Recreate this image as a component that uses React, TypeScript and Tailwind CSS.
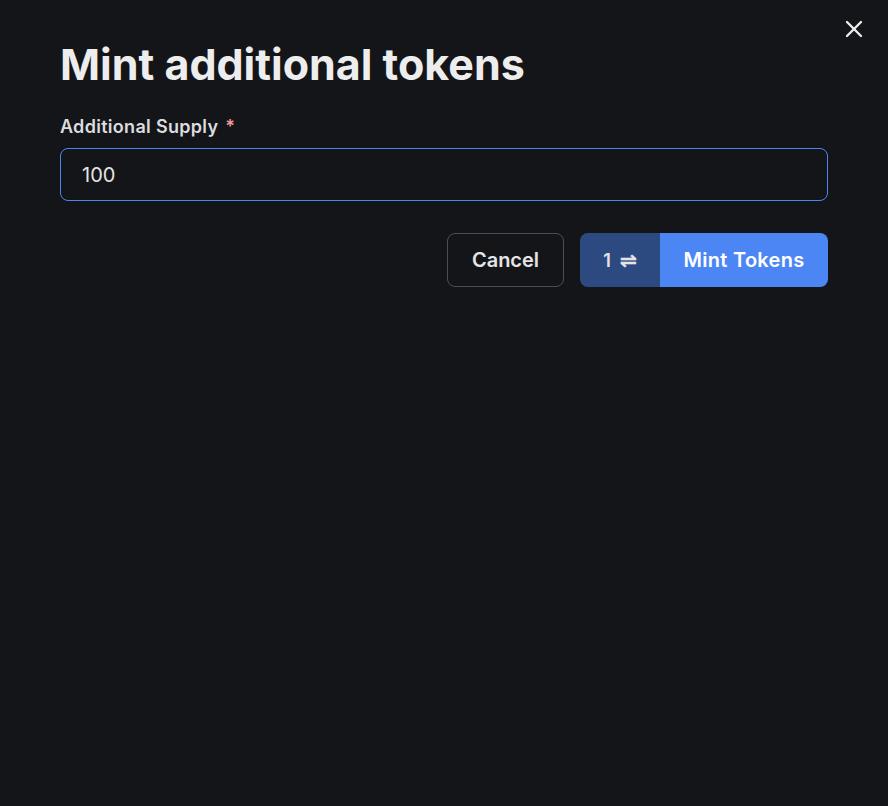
import { X } from 'lucide-react';

export default function App() {
  return (
    <div
      className="relative w-[888px] h-[806px] bg-[#141519] text-[#ededed]"
      style={{ fontFamily: 'Inter, "Noto Sans", sans-serif' }}
    >
      <button className="absolute right-[20px] top-[15px] text-[#ededed]">
        <X size={28} strokeWidth={2} />
      </button>

      <div className="flex flex-col px-[60px] pt-[37px]">
        <h1 className="text-[43px] font-bold leading-[54px]">Mint additional tokens</h1>

        <div className="mt-[24px] flex flex-col gap-[9px]">
          <label className="text-[18px] font-semibold leading-[24px] tracking-[0.3px] text-[#dcdcdf]">
            Additional Supply <span className="ml-[2px] text-[#f09a9a]">*</span>
          </label>
          <input
            defaultValue="100"
            className="h-[53px] w-full rounded-[8px] border border-[#4d84f0] bg-[#141519] px-[21px] text-[20px] text-[#e4e4e7] outline-none"
          />
        </div>

        <div className="mt-[32px] flex justify-end gap-[16px]">
          <button className="h-[54px] w-[117px] rounded-[8px] border border-[#4d4e53] text-[20px] font-semibold text-[#e4e4e7]">
            Cancel
          </button>
          <div className="flex h-[54px] overflow-hidden rounded-[8px]">
            <button className="flex w-[80px] items-center justify-center gap-[9px] bg-[#2d4a80] text-[18px] font-semibold text-[#e4e4e7]">
              <span>1</span>
              <span className="text-[20px]">⇌</span>
            </button>
            <button className="w-[168px] bg-[#4c86f5] text-[20px] font-semibold tracking-[0.3px] text-white">
              Mint Tokens
            </button>
          </div>
        </div>
      </div>
    </div>
  );
}
